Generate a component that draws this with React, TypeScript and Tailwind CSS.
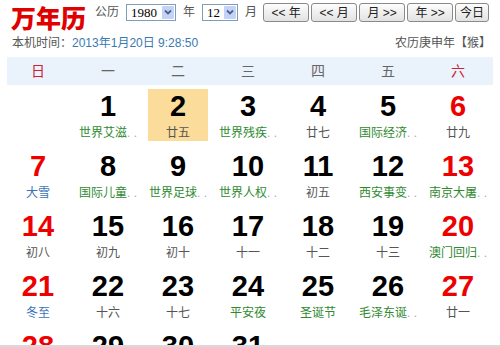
import React from 'react';

type Day = { d: number; sub?: string; kind?: 'fest' | 'term' | 'lunar'; red?: boolean; today?: boolean };

const WEEK = ['日', '一', '二', '三', '四', '五', '六'];

const ROWS: (Day | null)[][] = [
  [
    null,
    { d: 1, sub: '世界艾滋', kind: 'fest' },
    { d: 2, sub: '廿五', kind: 'lunar', today: true },
    { d: 3, sub: '世界残疾', kind: 'fest' },
    { d: 4, sub: '廿七', kind: 'lunar' },
    { d: 5, sub: '国际经济', kind: 'fest' },
    { d: 6, sub: '廿九', kind: 'lunar', red: true },
  ],
  [
    { d: 7, sub: '大雪', kind: 'term', red: true },
    { d: 8, sub: '国际儿童', kind: 'fest' },
    { d: 9, sub: '世界足球', kind: 'fest' },
    { d: 10, sub: '世界人权', kind: 'fest' },
    { d: 11, sub: '初五', kind: 'lunar' },
    { d: 12, sub: '西安事变', kind: 'fest' },
    { d: 13, sub: '南京大屠', kind: 'fest', red: true },
  ],
  [
    { d: 14, sub: '初八', kind: 'lunar', red: true },
    { d: 15, sub: '初九', kind: 'lunar' },
    { d: 16, sub: '初十', kind: 'lunar' },
    { d: 17, sub: '十一', kind: 'lunar' },
    { d: 18, sub: '十二', kind: 'lunar' },
    { d: 19, sub: '十三', kind: 'lunar' },
    { d: 20, sub: '澳门回归', kind: 'fest', red: true },
  ],
  [
    { d: 21, sub: '冬至', kind: 'term', red: true },
    { d: 22, sub: '十六', kind: 'lunar' },
    { d: 23, sub: '十七', kind: 'lunar' },
    { d: 24, sub: '平安夜', kind: 'fest' },
    { d: 25, sub: '圣诞节', kind: 'fest' },
    { d: 26, sub: '毛泽东诞', kind: 'fest' },
    { d: 27, sub: '廿一', kind: 'lunar', red: true },
  ],
  [
    { d: 28, sub: '廿二', kind: 'lunar', red: true },
    { d: 29, sub: '廿三', kind: 'lunar' },
    { d: 30, sub: '廿四', kind: 'lunar' },
    { d: 31, sub: '廿五', kind: 'lunar' },
    null,
    null,
    null,
  ],
];

// fake XP-style select
function Pick({ value, width }: { value: string; width: string }) {
  return (
    <div className={`flex h-[17px] items-center border border-[#7f9db9] bg-white ${width}`}>
      <span className="flex-1 pl-[4px] font-['Liberation_Serif',serif] text-[13px] leading-none text-black">{value}</span>
      <span className="mr-[1px] flex h-[13px] w-[12px] items-center justify-center rounded-[1px] bg-[#c3d3f8]">
        <svg width="8" height="6" viewBox="0 0 8 6">
          <path d="M1 1.5 L4 4.5 L7 1.5" fill="none" stroke="#4d6185" strokeWidth="1.8" />
        </svg>
      </span>
    </div>
  );
}

function Btn({ label, width }: { label: string; width: string }) {
  return (
    <div
      className={`flex h-[19px] items-center justify-center rounded-[3px] border border-[#8a8a8a] bg-[linear-gradient(#fdfdfd,#e2e2e2)] text-[12px] leading-none text-[#222] ${width}`}
    >
      {label}
    </div>
  );
}

function Cell({ day }: { day: Day | null }) {
  if (!day) return <div />;
  const subColor =
    day.kind === 'fest' ? 'text-[#2f8a2f]' : day.kind === 'term' ? 'text-[#3a74b8]' : 'text-[#555]';
  const long = day.kind === 'fest' && day.sub && day.sub.length >= 4;
  return (
    <div className="pt-[3px]">
      <div
        className={`mx-auto flex h-[52px] w-[60px] flex-col items-center pt-[2px] ${day.today ? 'bg-[#fcdc9a]' : ''}`}
      >
        <div
          className={`font-['Liberation_Sans',sans-serif] text-[29px] font-bold leading-[30px] ${day.red ? 'text-[#ee0000]' : 'text-black'}`}
        >
          {day.d}
        </div>
        <div className={`mt-[4px] whitespace-nowrap text-[12px] leading-[16px] ${subColor}`}>
          {day.sub}
          {long && <span className="text-[#aaa]">. .</span>}
        </div>
      </div>
    </div>
  );
}

export default function App() {
  return (
    <div className="h-[347px] w-[500px] overflow-hidden border-b-2 border-[#d9d9d9] bg-white font-['Liberation_Sans','Noto_Sans_CJK_SC',sans-serif] text-[#444]">
      {/* top bar */}
      <div className="flex items-start pt-[3px]">
        <div className="ml-[11px] mt-[1px] font-['Noto_Sans_CJK_SC',serif] text-[25px] font-black leading-[26px] text-[#e00000]">
          万年历
        </div>
        <div className="ml-[9px] flex items-center gap-[7px] text-[12px]">
          <span className="text-[#555]">公历</span>
          <Pick value="1980" width="w-[50px]" />
          <span className="text-[#555]">年</span>
          <Pick value="12" width="w-[36px]" />
          <span className="text-[#555]">月</span>
        </div>
        <div className="ml-[6px] flex gap-[2px]">
          <Btn label="<< 年" width="w-[46px]" />
          <Btn label="<< 月" width="w-[46px]" />
          <Btn label="月 >>" width="w-[46px]" />
          <Btn label="年 >>" width="w-[46px]" />
          <Btn label="今日" width="w-[34px]" />
        </div>
      </div>

      {/* second line */}
      <div className="mt-[5px] flex items-center justify-between pl-[12px] pr-[9px] text-[12px] leading-[16px]">
        <div>
          <span className="text-[#555]">本机时间：</span>
          <span className="text-[#3a7ab2]">2013年1月20日 9:28:50</span>
        </div>
        <div className="text-[#555]">农历庚申年【猴】</div>
      </div>

      {/* week header */}
      <div className="ml-[3px] mt-[6px] grid h-[28px] w-[490px] grid-cols-7 bg-[linear-gradient(to_right,#fff_4px,#eaf2fc_4px)]">
        {WEEK.map((w, i) => (
          <div
            key={w}
            className={`flex items-center justify-center text-[14px] ${i === 0 || i === 6 ? 'text-[#cc2233]' : 'text-[#666]'}`}
          >
            {w}
          </div>
        ))}
      </div>

      {/* days */}
      <div className="ml-[3px] mt-[1px] w-[490px]">
        {ROWS.map((row, r) => (
          <div key={r} className="grid h-[60px] grid-cols-7">
            {row.map((day, c) => (
              <Cell key={c} day={day} />
            ))}
          </div>
        ))}
      </div>
    </div>
  );
}
